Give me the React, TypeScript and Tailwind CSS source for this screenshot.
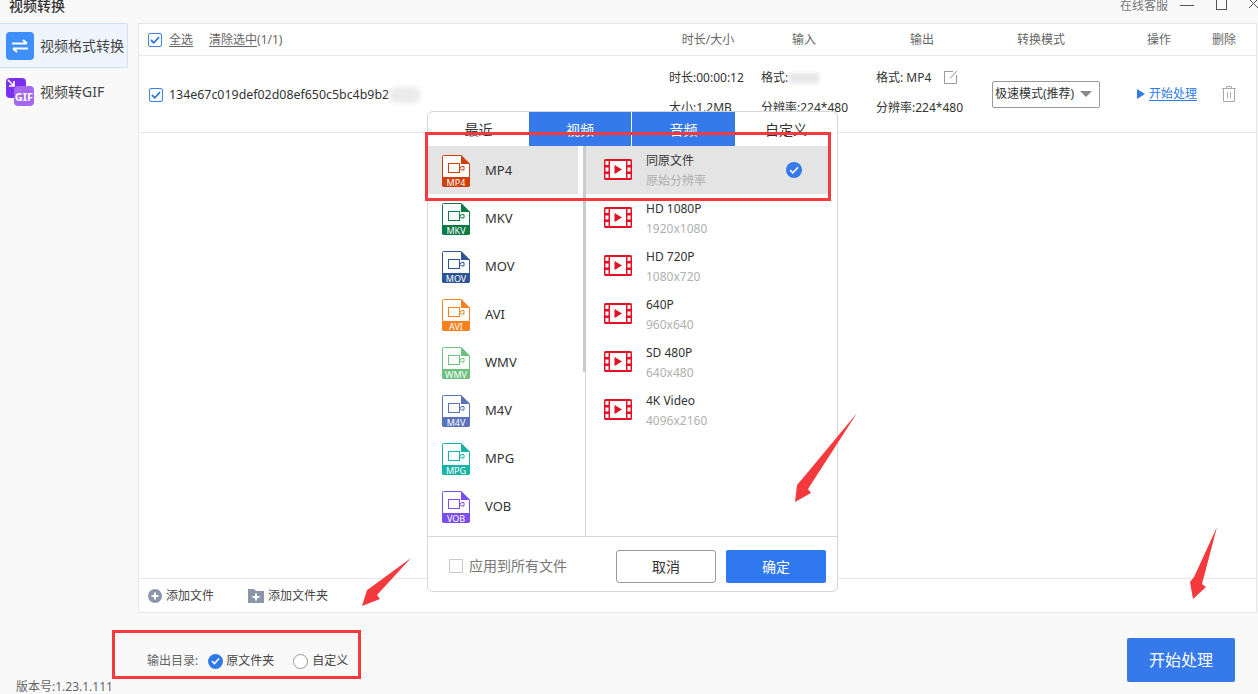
import { ReactNode } from "react";

const formats = [
  { name: "MP4", color: "#cf3f0c", active: true },
  { name: "MKV", color: "#0c7a45" },
  { name: "MOV", color: "#2d5596" },
  { name: "AVI", color: "#f5821f" },
  { name: "WMV", color: "#6cc080" },
  { name: "M4V", color: "#5a72b8" },
  { name: "MPG", color: "#17b3a6" },
  { name: "VOB", color: "#7c4dee" },
];

const presets = [
  { title: "同原文件", sub: "原始分辨率", active: true },
  { title: "HD 1080P", sub: "1920x1080" },
  { title: "HD 720P", sub: "1080x720" },
  { title: "640P", sub: "960x640" },
  { title: "SD 480P", sub: "640x480" },
  { title: "4K Video", sub: "4096x2160" },
];

const columns = [
  { label: "时长/大小", className: "ml-0" },
  { label: "输入", className: "ml-[36px]" },
  { label: "输出", className: "ml-[58px]" },
  { label: "转换模式", className: "ml-[59px]" },
  { label: "操作", className: "ml-[58px]" },
  { label: "删除", className: "ml-[5px]" },
];

function Checkbox() {
  return (
    <span className="flex h-[14px] w-[14px] shrink-0 items-center justify-center rounded-[2px] border border-[#3b82e8] bg-white">
      <svg width="10" height="8" viewBox="0 0 10 8" fill="none">
        <path d="M1 4l2.8 2.8L9 1.2" stroke="#2f7ae5" strokeWidth="1.8" />
      </svg>
    </span>
  );
}

function FileIcon({ name, color }: { name: string; color: string }) {
  return (
    <svg width="28" height="32" viewBox="0 0 28 32" className="mt-[2px] shrink-0">
      <path d="M1.5 .5H19L27.5 9V30a1.5 1.5 0 0 1-1.5 1.5H2A1.5 1.5 0 0 1 .5 30V1.5a1 1 0 0 1 1-1z" fill="#fff" stroke={color} />
      <path d="M19 0L28 9H19z" fill={color} />
      <path d="M0 22H28V30a2 2 0 0 1-2 2H2a2 2 0 0 1-2-2z" fill={color} />
      <rect x="6.5" y="8.5" width="11" height="9" fill="none" stroke={color} />
      <path d="M17.5 13l2.500-1.500h2v3.500h-2l-2.500-1.500" fill="none" stroke={color} />
      <text x="14" y="30.500" textAnchor="middle" fontSize="9" fill="#fff" fontFamily="Noto Sans">
        {name}
      </text>
    </svg>
  );
}

function FilmIcon() {
  return (
    <svg width="28" height="21" viewBox="0 0 28 21" className="mb-[2px] shrink-0">
      <rect width="28" height="21" rx="1.500" fill="#e60f23" />
      <rect x="6" y="2" width="16" height="17" fill="#fff" />
      {[2, 8.500, 15].map((y) => (
        <g key={y}>
          <rect x="1.500" y={y} width="3" height="4" fill="#fff" />
          <rect x="23.500" y={y} width="3" height="4" fill="#fff" />
        </g>
      ))}
      <path d="M10.500 6L18 10.500L10.500 15z" fill="#e60f23" />
    </svg>
  );
}

function GifIcon() {
  return (
    <svg width="28" height="28" viewBox="0 0 28 28" className="shrink-0">
      <rect width="20" height="20" rx="4" fill="#7b2ff0" />
      <path d="M2 2l6 6M8 3v5H3" stroke="#fff" strokeWidth="1.600" fill="none" />
      <rect x="8" y="8" width="20" height="20" rx="4" fill="#a468ee" />
      <text x="18" y="23" textAnchor="middle" fontSize="11" fontWeight="700" fill="#fff" fontFamily="Noto Sans">
        GIF
      </text>
    </svg>
  );
}

function Detail({ top, bottom, className }: { top: ReactNode; bottom: ReactNode; className: string }) {
  return (
    <div className={`flex flex-col self-start pt-[7px] leading-[30px] whitespace-nowrap ${className}`}>
      <div className="flex items-center">{top}</div>
      <div>{bottom}</div>
    </div>
  );
}

export default function App() {
  return (
    <div
      className="relative h-[694px] w-[1258px] overflow-hidden bg-[#f9f9f9] text-[12px] text-[#444]"
      style={{ fontFamily: '"Noto Sans", "Noto Sans CJK SC", sans-serif' }}
    >
      {/* title bar */}
      <div className="flex h-[23px] items-start overflow-hidden">
        <div className="ml-[9px] -mt-[2px] text-[14px] leading-[16px] font-medium text-[#333]">视频转换</div>
        <div className="ml-auto -mt-[1px] flex items-start leading-[14px] text-[#777]">
          <span>在线客服</span>
          <svg width="90" height="12" viewBox="0 0 90 12" className="mt-[1px]" fill="none" stroke="#555">
            <path d="M12 5.500H26" />
            <rect x="48.500" y="-1" width="10" height="10.500" />
            <path d="M81 -1l9 9M90 -1l-9 9" />
          </svg>
        </div>
      </div>

      <div className="flex h-[590px]">
        {/* sidebar */}
        <div className="w-[138px] shrink-0 text-[14px] text-[#444]">
          <div className="flex h-[45px] w-[128px] items-center gap-[6px] rounded-r-[2px] border border-l-0 border-[#cfe0f7] bg-[#eef5fe] pl-[6px]">
            <div className="flex h-[28px] w-[28px] items-center justify-center rounded-[4px] bg-[#3f8ffa]">
              <svg width="16" height="14" viewBox="0 0 16 14" fill="none" stroke="#fff" strokeWidth="2">
                <path d="M0 4.500H15M11 1l4 3.500M16 9.500H1M5 13L1 9.500" />
              </svg>
            </div>
            <span className="whitespace-nowrap">视频格式转换</span>
          </div>
          <div className="flex h-[48px] w-[128px] items-center gap-[6px] pl-[6px]">
            <GifIcon />
            <span className="mb-[2px] whitespace-nowrap">视频转GIF</span>
          </div>
        </div>

        {/* main panel */}
        <div className="flex w-[1119px] flex-col border border-[#e8e8e8] bg-white">
          <div className="flex h-[32px] shrink-0 items-center border-b border-[#e8e8e8] text-[#666]">
            <div className="flex w-[539px] items-center pl-[9px]">
              <Checkbox />
              <span className="ml-[7px] underline underline-offset-2">全选</span>
              <span className="ml-[16px] underline underline-offset-2">清除选中</span>
              <span>(1/1)</span>
            </div>
            {columns.map((col) => (
              <div key={col.label} className={`w-[60px] text-center whitespace-nowrap ${col.className}`}>
                {col.label}
              </div>
            ))}
          </div>

          <div className="flex h-[77px] shrink-0 items-center border-b border-[#e8e8e8] text-[#333]">
            <div className="mt-[2px] flex w-[530px] items-center pl-[10px]">
              <Checkbox />
              <span className="ml-[6px] text-[12.4px]">134e67c019def02d08ef650c5bc4b9b2</span>
              <span className="h-[16px] w-[32px] rounded-full bg-[#ebebeb] blur-[2px]" />
            </div>
            <Detail className="w-[92px]" top="时长:00:00:12" bottom="大小:1.2MB" />
            <Detail
              className="w-[115px]"
              top={
                <>
                  格式:
                  <span className="ml-px h-[10px] w-[30px] bg-[#e6e6e6] blur-[2px]" />
                </>
              }
              bottom="分辨率:224*480"
            />
            <Detail
              className="w-[116px]"
              top={
                <>
                  格式: MP4
                  <svg width="14" height="14" viewBox="0 0 14 14" className="mb-[2px] ml-[13px]" fill="none" stroke="#999">
                    <path d="M9 1.500H.5V13.500H12.500V5M6 8.500L13 .5" />
                  </svg>
                </>
              }
              bottom="分辨率:224*480"
            />
            <div className="flex h-[27px] w-[108px] shrink-0 items-center rounded-[2px] border border-[#999] pl-[2px]">
              <span className="whitespace-nowrap">极速模式(推荐)</span>
              <span className="ml-[6px] h-0 w-0 border-x-[6px] border-t-[6px] border-x-transparent border-t-[#888]" />
            </div>
            <div className="ml-[37px] flex w-[85px] items-center text-[#2f7ae5]">
              <span className="h-0 w-0 border-y-[5px] border-l-[8px] border-y-transparent border-l-[#2f7ae5]" />
              <span className="ml-[4px] underline underline-offset-2">开始处理</span>
            </div>
            <svg width="14" height="16" viewBox="0 0 14 16" fill="none" stroke="#aaa">
              <path d="M0 2.500H14M4.500 2.500V.5H9.500V2.500M1.500 2.500V15.500H12.500V2.500M5.500 6V12.500M8.500 6V12.500" />
            </svg>
          </div>

          <div className="flex-1" />

          <div className="flex h-[34px] shrink-0 items-center border-t border-[#e8e8e8] pl-[9px] text-[#444]">
            <svg width="14" height="14" viewBox="0 0 14 14">
              <circle cx="7" cy="7" r="7" fill="#8d96a8" />
              <path d="M7 3.500V10.500M3.500 7H10.500" stroke="#fff" strokeWidth="2" />
            </svg>
            <span className="ml-[4px]">添加文件</span>
            <svg width="16" height="14" viewBox="0 0 16 14" className="ml-[34px]">
              <path d="M0 0H6L8 2H16V14H0z" fill="#8d96a8" />
              <path d="M8 4.500V11.500M4.500 8H11.500" stroke="#fff" strokeWidth="2" />
            </svg>
            <span className="ml-[4px]">添加文件夹</span>
          </div>
        </div>
      </div>

      {/* footer */}
      <div className="flex h-[81px]">
        <div className="flex w-[147px] shrink-0 items-end pl-[16px] leading-[14px] whitespace-nowrap text-[#666]">
          版本号:1.23.1.111
        </div>
        <div className="mt-[40px] flex h-[16px] items-center whitespace-nowrap">
          <span className="text-[#666]">输出目录:</span>
          <span className="ml-[10px] flex h-[15px] w-[15px] items-center justify-center rounded-full bg-[#2f7ae5]">
            <svg width="9" height="8" viewBox="0 0 10 8" fill="none">
              <path d="M1 4l2.800 2.800L9 1.200" stroke="#fff" strokeWidth="1.800" />
            </svg>
          </span>
          <span className="ml-[3px]">原文件夹</span>
          <span className="ml-[19px] h-[15px] w-[15px] rounded-full border border-[#999] bg-white" />
          <span className="ml-[4px]">自定义</span>
        </div>
        <button className="mt-[25px] mr-[23px] ml-auto h-[44px] w-[108px] rounded-[2px] bg-[#3579ea] text-[16px] text-white">
          开始处理
        </button>
      </div>

      {/* format dialog */}
      <div className="absolute top-[111px] left-[427px] flex h-[481px] w-[411px] flex-col overflow-hidden rounded-[6px] border border-[#d6d6d6] bg-white text-[#333]">
        <div className="flex h-[34px] shrink-0 text-[14px]">
          <div className="flex w-[101px] justify-center pt-[7px]">最近</div>
          <div className="flex w-[102px] justify-center bg-[#3579ea] pt-[7px] text-white">视频</div>
          <div className="ml-px flex w-[103px] justify-center bg-[#3579ea] pt-[7px] text-white">音频</div>
          <div className="flex flex-1 justify-center pt-[7px]">自定义</div>
        </div>
        <div className="flex h-[391px] border-b border-[#d6d6d6]">
          <div className="relative h-full w-[158px] shrink-0 border-r border-[#d6d6d6]">
            {formats.map((f) => (
              <div
                key={f.name}
                className={`flex h-[48px] w-[150px] items-center gap-[15px] pl-[14px] text-[13px] ${f.active ? "bg-[#e4e4e4]" : ""}`}
              >
                <FileIcon name={f.name} color={f.color} />
                <span className="mt-[2px]">{f.name}</span>
              </div>
            ))}
            <div className="absolute top-0 -right-px h-[226px] w-[3px] bg-[#c8ccd2]" />
          </div>
          <div className="flex-1">
            {presets.map((p) => (
              <div
                key={p.title}
                className={`flex h-[48px] items-center pl-[18px] ${p.active ? "mr-[8px] bg-[#e4e4e4]" : ""}`}
              >
                <FilmIcon />
                <div className="mt-[2px] ml-[14px] leading-[20px]">
                  <div>{p.title}</div>
                  <div className="text-[#b0b0b0]">{p.sub}</div>
                </div>
                {p.active && (
                  <span className="mr-[27px] ml-auto flex h-[16px] w-[16px] items-center justify-center rounded-full bg-[#3579ea]">
                    <svg width="10" height="8" viewBox="0 0 10 8" fill="none">
                      <path d="M1 4l2.800 2.800L9 1.200" stroke="#fff" strokeWidth="1.600" />
                    </svg>
                  </span>
                )}
              </div>
            ))}
          </div>
        </div>
        <div className="flex flex-1 items-center pt-[3px] pr-[11px] pl-[21px] text-[14px]">
          <span className="h-[14px] w-[14px] border border-[#c8c8c8]" />
          <span className="ml-[6px] text-[#777]">应用到所有文件</span>
          <button className="mt-px ml-auto h-[33px] w-[100px] rounded-[3px] border border-[#999] bg-white">取消</button>
          <button className="mt-px ml-[10px] h-[33px] w-[100px] rounded-[2px] bg-[#2f78f0] text-white">确定</button>
        </div>
      </div>

      {/* red annotations on the screenshot */}
      <div className="absolute top-[132px] left-[425px] h-[69px] w-[406px] border-[3px] border-[#f53a3d]" />
      <div className="absolute top-[630px] left-[112px] h-[49px] w-[249px] border-[3px] border-[#f53a3d]" />
      <svg width="1258" height="694" viewBox="0 0 1258 694" className="pointer-events-none absolute inset-0" fill="#f53a3d">
        <path d="M857 413L803 478L797 485L795 502L811 493L808 489z" />
        <path d="M1217 527L1194 577L1190 582L1193 599L1206 587L1202 584z" />
        <path d="M411 558L370 588L367 590L362 606L380 599L377 595z" />
      </svg>
    </div>
  );
}
